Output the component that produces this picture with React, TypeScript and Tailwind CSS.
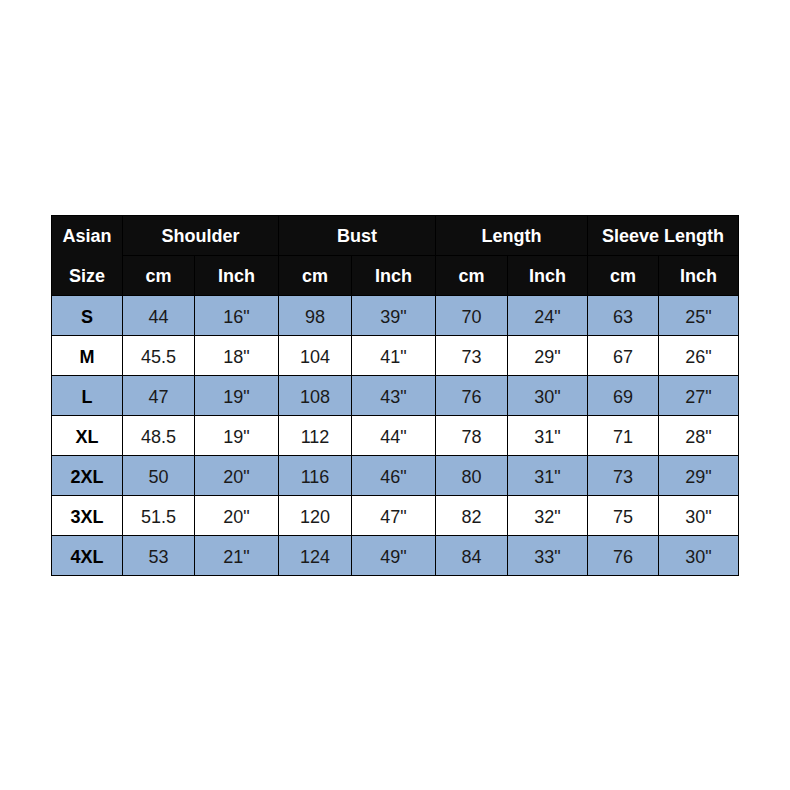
import React from "react";

const rows: [string, string, string, string, string, string, string, string, string][] = [
  ["S", "44", '16"', "98", '39"', "70", '24"', "63", '25"'],
  ["M", "45.5", '18"', "104", '41"', "73", '29"', "67", '26"'],
  ["L", "47", '19"', "108", '43"', "76", '30"', "69", '27"'],
  ["XL", "48.5", '19"', "112", '44"', "78", '31"', "71", '28"'],
  ["2XL", "50", '20"', "116", '46"', "80", '31"', "73", '29"'],
  ["3XL", "51.5", '20"', "120", '47"', "82", '32"', "75", '30"'],
  ["4XL", "53", '21"', "124", '49"', "84", '33"', "76", '30"'],
];

export default function App() {
  const hd = "bg-[#0d0d0d] text-white font-bold flex items-center justify-center h-[39px]";
  return (
    <div
      className="w-[790px] h-[790px] bg-white pt-[215px] pl-[51px]"
      style={{ fontFamily: '"Liberation Sans", Arial, sans-serif' }}
    >
      <div className="grid grid-cols-[70px_71px_83px_72px_83px_71px_79px_70px_79px] gap-px bg-black border border-black w-[688px] text-[18px] leading-none">
        <div className="row-span-2 bg-[#0d0d0d] text-white font-bold flex flex-col">
          <div className="h-[40px] flex items-center justify-center">Asian</div>
          <div className="h-[39px] flex items-center justify-center">Size</div>
        </div>
        <div className={`${hd} col-span-2`}>Shoulder</div>
        <div className={`${hd} col-span-2`}>Bust</div>
        <div className={`${hd} col-span-2`}>Length</div>
        <div className={`${hd} col-span-2`}>Sleeve Length</div>
        {["cm", "Inch", "cm", "Inch", "cm", "Inch", "cm", "Inch"].map((t, i) => (
          <div key={i} className={hd}>
            {t}
          </div>
        ))}
        {rows.map((r, ri) =>
          r.map((c, ci) => (
            <div
              key={`${ri}-${ci}`}
              className={`h-[39px] pt-[2px] flex items-center justify-center text-[#1a1a1a] ${
                ri % 2 === 0 ? "bg-[#95b3d7]" : "bg-white"
              } ${ci === 0 ? "font-bold text-black" : ""}`}
            >
              {c}
            </div>
          ))
        )}
      </div>
    </div>
  );
}
